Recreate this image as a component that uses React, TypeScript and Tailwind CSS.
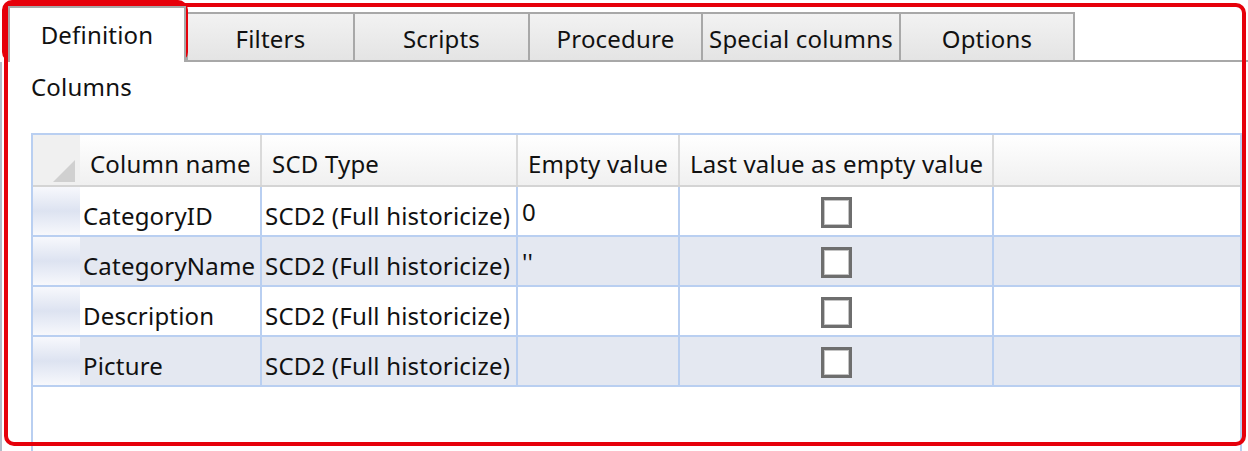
import { ReactNode } from 'react'

const tabs = [
  { label: 'Filters', w: 'w-[167px]' },
  { label: 'Scripts', w: 'w-[175px]' },
  { label: 'Procedure', w: 'w-[173px]' },
  { label: 'Special columns', w: 'w-[198px]' },
  { label: 'Options', w: 'w-[176px] border-r-2' },
]

const rows = [
  { name: 'CategoryID', type: 'SCD2 (Full historicize)', empty: '0' },
  { name: 'CategoryName', type: 'SCD2 (Full historicize)', empty: "''" },
  { name: 'Description', type: 'SCD2 (Full historicize)', empty: '' },
  { name: 'Picture', type: 'SCD2 (Full historicize)', empty: '' },
]

const cols = 'grid grid-cols-[47px_182px_256px_162px_314px_1fr]'

function HeaderCell({ children }: { children?: ReactNode }) {
  return (
    <div className="flex h-[50px] items-center whitespace-nowrap border-r-2 border-[#dadada] bg-gradient-to-b from-white to-[#f0f0f0] pl-[10px] pt-[7px]">
      {children}
    </div>
  )
}

function Checkbox() {
  return (
    <span className="block size-[31px] border-[3px] border-[#6e6e6e] bg-white shadow-[inset_0_0_0_1px_#c4c4c4]" />
  )
}

export default function App() {
  return (
    <div
      className="relative h-[451px] w-[1248px] overflow-hidden bg-white text-[24px] tracking-[0.2px] text-[#111]"
      style={{ fontFamily: '"Noto Sans", "Open Sans", sans-serif' }}
    >
      {/* Tab strip */}
      <div className="flex h-[62px] items-end pl-[8px]">
        <div className="z-10 flex h-[56px] w-[178px] items-start justify-center border-2 border-b-0 border-[#a8a8a8] bg-white pt-[12px] leading-[30px]">
          Definition
        </div>
        <div className="flex flex-1 items-end border-b-2 border-[#a8a8a8]">
          {tabs.map((t) => (
            <div
              key={t.label}
              className={`${t.w} flex h-[48px] items-center justify-center whitespace-nowrap border-l-2 border-t-2 border-[#a8a8a8] bg-gradient-to-b from-[#f2f2f2] to-[#e4e4e4] pt-[4px] leading-[30px]`}
            >
              {t.label}
            </div>
          ))}
        </div>
      </div>

      {/* Panel */}
      <div className="h-[389px] border-l-2 border-[#b4bcc8] pl-[29px] pt-[10px]">
        <div className="mb-[31px] leading-[30px]">Columns</div>

        <div className="h-[320px] w-[1211px] border-2 border-b-0 border-[#b9cff1]">
          <div className={`${cols} border-b-2 border-[#d4d4d4]`}>
            <div className="relative h-[50px] bg-[#f0f0f0]">
              <span className="absolute bottom-[3px] right-[5px] size-0 border-b-[22px] border-l-[22px] border-b-[#d0d0d0] border-l-transparent" />
            </div>
            <HeaderCell>Column name</HeaderCell>
            <HeaderCell>SCD Type</HeaderCell>
            <HeaderCell>Empty value</HeaderCell>
            <HeaderCell>Last value as empty value</HeaderCell>
            <div className="h-[50px] bg-gradient-to-b from-white to-[#f0f0f0]" />
          </div>

          {rows.map((r, i) => (
            <div
              key={r.name}
              className={`${cols} h-[50px] whitespace-nowrap border-b-2 border-[#b9cff1] ${i % 2 ? 'bg-[#e4e8f1]' : 'bg-white'}`}
            >
              <div className="bg-gradient-to-b from-[#f7f8fc] via-[#dde3f1] to-[#f7f8fc]" />
              <div className="flex items-center border-r-2 border-[#b9cff1] pl-[3px] pt-[9px]">{r.name}</div>
              <div className="flex items-center border-r-2 border-[#b9cff1] pl-[3px] pt-[9px]">{r.type}</div>
              <div className="flex items-center border-r-2 border-[#b9cff1] pl-[4px] pt-[2px]">{r.empty}</div>
              <div className="flex items-center justify-center border-r-2 border-[#b9cff1] pt-[2px]">
                <Checkbox />
              </div>
              <div />
            </div>
          ))}
        </div>
      </div>

      {/* Red annotation outlines */}
      <div className="pointer-events-none absolute left-[4px] top-[3px] h-[443px] w-[1242px] rounded-[10px] border-4 border-[#e6000a]" />
      <div className="pointer-events-none absolute left-[2px] top-0 h-[62px] w-[186px] rounded-[10px] border-[5px] border-[#e6000a]" />
    </div>
  )
}
